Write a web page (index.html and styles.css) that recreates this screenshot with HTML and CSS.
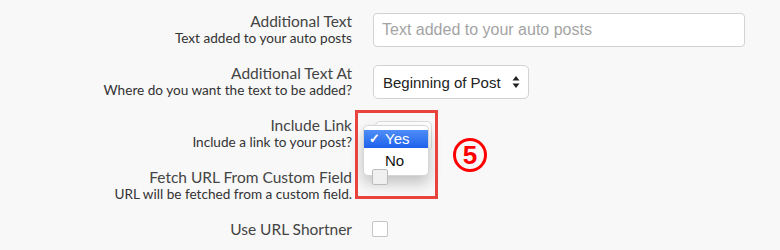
FILE: index.html
```html
<!DOCTYPE html>
<html lang="en">
<head>
    <meta charset="UTF-8">
    <title>Auto Post Settings</title>
    <link rel="stylesheet" href="styles.css">
</head>
<body>
    <div class="settings">
        <div class="row">
            <div class="label">
                <div class="title">Additional Text</div>
                <div class="desc">Text added to your auto posts</div>
            </div>
            <div class="field">
                <input type="text" class="text-input" placeholder="Text added to your auto posts">
            </div>
        </div>
        <div class="row">
            <div class="label">
                <div class="title">Additional Text At</div>
                <div class="desc">Where do you want the text to be added?</div>
            </div>
            <div class="field">
                <div class="select">
                    <span>Beginning of Post</span>
                    <svg class="arrows" width="8" height="14" viewBox="0 0 8 14">
                        <path d="M4 1 L7.5 5.5 H0.5 Z M4 13 L7.5 8.5 H0.5 Z" fill="#222"/>
                    </svg>
                </div>
            </div>
        </div>
        <div class="row">
            <div class="label">
                <div class="title">Include Link</div>
                <div class="desc">Include a link to your post?</div>
            </div>
            <div class="field">
                <div class="select small"></div>
                <ul class="menu">
                    <li class="active"><span class="check">✓</span>Yes</li>
                    <li>No</li>
                </ul>
            </div>
        </div>
        <div class="row">
            <div class="label">
                <div class="title">Fetch URL From Custom Field</div>
                <div class="desc">URL will be fetched from a custom field.</div>
            </div>
            <div class="field">
                <input type="checkbox" class="checkbox shaded">
            </div>
        </div>
        <div class="row last">
            <div class="label">
                <div class="title">Use URL Shortner</div>
            </div>
            <div class="field">
                <input type="checkbox" class="checkbox">
            </div>
        </div>

        <div class="highlight"></div>
        <div class="step">5</div>
    </div>
</body>
</html>
```

FILE: styles.css
```css
body {
    margin: 0;
    background-color: #f8f8f8;
    font-family: Lato, "Open Sans", sans-serif;
    color: #444;
}
.settings {
    position: relative;
    padding-top: 13px;
}
.row {
    display: grid;
    grid-template-columns: 352px 372px;
    column-gap: 21px;
    height: 52px;
}
.row.last {
    height: 20px;
}
.label {
    text-align: right;
    margin-top: -1px;
}
.title {
    font-size: 15.5px;
    line-height: 18px;
}
.desc {
    font-size: 13.6px;
    line-height: 17px;
    color: #333;
}
.field {
    position: relative;
    line-height: 0;
}
.text-input {
    box-sizing: border-box;
    width: 372px;
    height: 34px;
    margin: 0;
    padding: 0 8px;
    border: 1px solid #d2d2d2;
    border-radius: 4px;
    background-color: #fff;
    font-family: "Liberation Sans", Arial, sans-serif;
    font-size: 16px;
}
.text-input::placeholder {
    color: #a4a4a4;
}
.select {
    box-sizing: border-box;
    display: inline-flex;
    align-items: center;
    gap: 11px;
    height: 34px;
    padding: 0 8px 0 9px;
    border: 1px solid #d2d2d2;
    border-radius: 5px;
    background-color: #fff;
    font-family: "Liberation Sans", Arial, sans-serif;
    font-size: 15px;
    line-height: normal;
    color: #222;
}
.select.small {
    width: 57px;
    margin-left: 2px;
    margin-top: 4px;
    height: 30px;
    border-color: #dcdcdc;
}
.menu {
    position: absolute;
    left: -10px;
    top: 8px;
    width: 66px;
    margin: 0;
    padding: 4px 0 5px;
    list-style: none;
    background-color: #fff;
    border: 1px solid #d6d6d6;
    border-radius: 5px;
    box-shadow: 0 7px 14px rgba(0, 0, 0, 0.22);
    font-family: "Liberation Sans", Arial, sans-serif;
    font-size: 15px;
    color: #111;
    box-sizing: border-box;
}
.menu li {
    height: 18px;
    line-height: 18px;
    padding-left: 21px;
    position: relative;
}
.menu li + li {
    margin-top: 4px;
}
.menu .active {
    background: linear-gradient(#4f8ef7, #1e62ec);
    color: #fff;
}
.check {
    position: absolute;
    left: 5px;
    font-size: 13px;
    font-weight: bold;
}
.checkbox {
    appearance: none;
    box-sizing: border-box;
    width: 16px;
    height: 16px;
    margin: 0 0 0 -1px;
    border: 1px solid #c4c4c4;
    border-radius: 2px;
    background-color: #fff;
}
.checkbox.shaded {
    background-color: #f0f0f0;
    border-color: #bcbcbc;
}
.highlight {
    position: absolute;
    left: 355px;
    top: 110px;
    width: 83px;
    height: 89px;
    box-sizing: border-box;
    border: 3px solid #e8433c;
}
.step {
    position: absolute;
    left: 453px;
    top: 138px;
    width: 34px;
    height: 34px;
    box-sizing: border-box;
    border: 3px solid #f00;
    border-radius: 50%;
    color: #f00;
    font-family: "Liberation Sans", Arial, sans-serif;
    font-weight: bold;
    font-size: 26px;
    line-height: 28px;
    text-align: center;
}
```
